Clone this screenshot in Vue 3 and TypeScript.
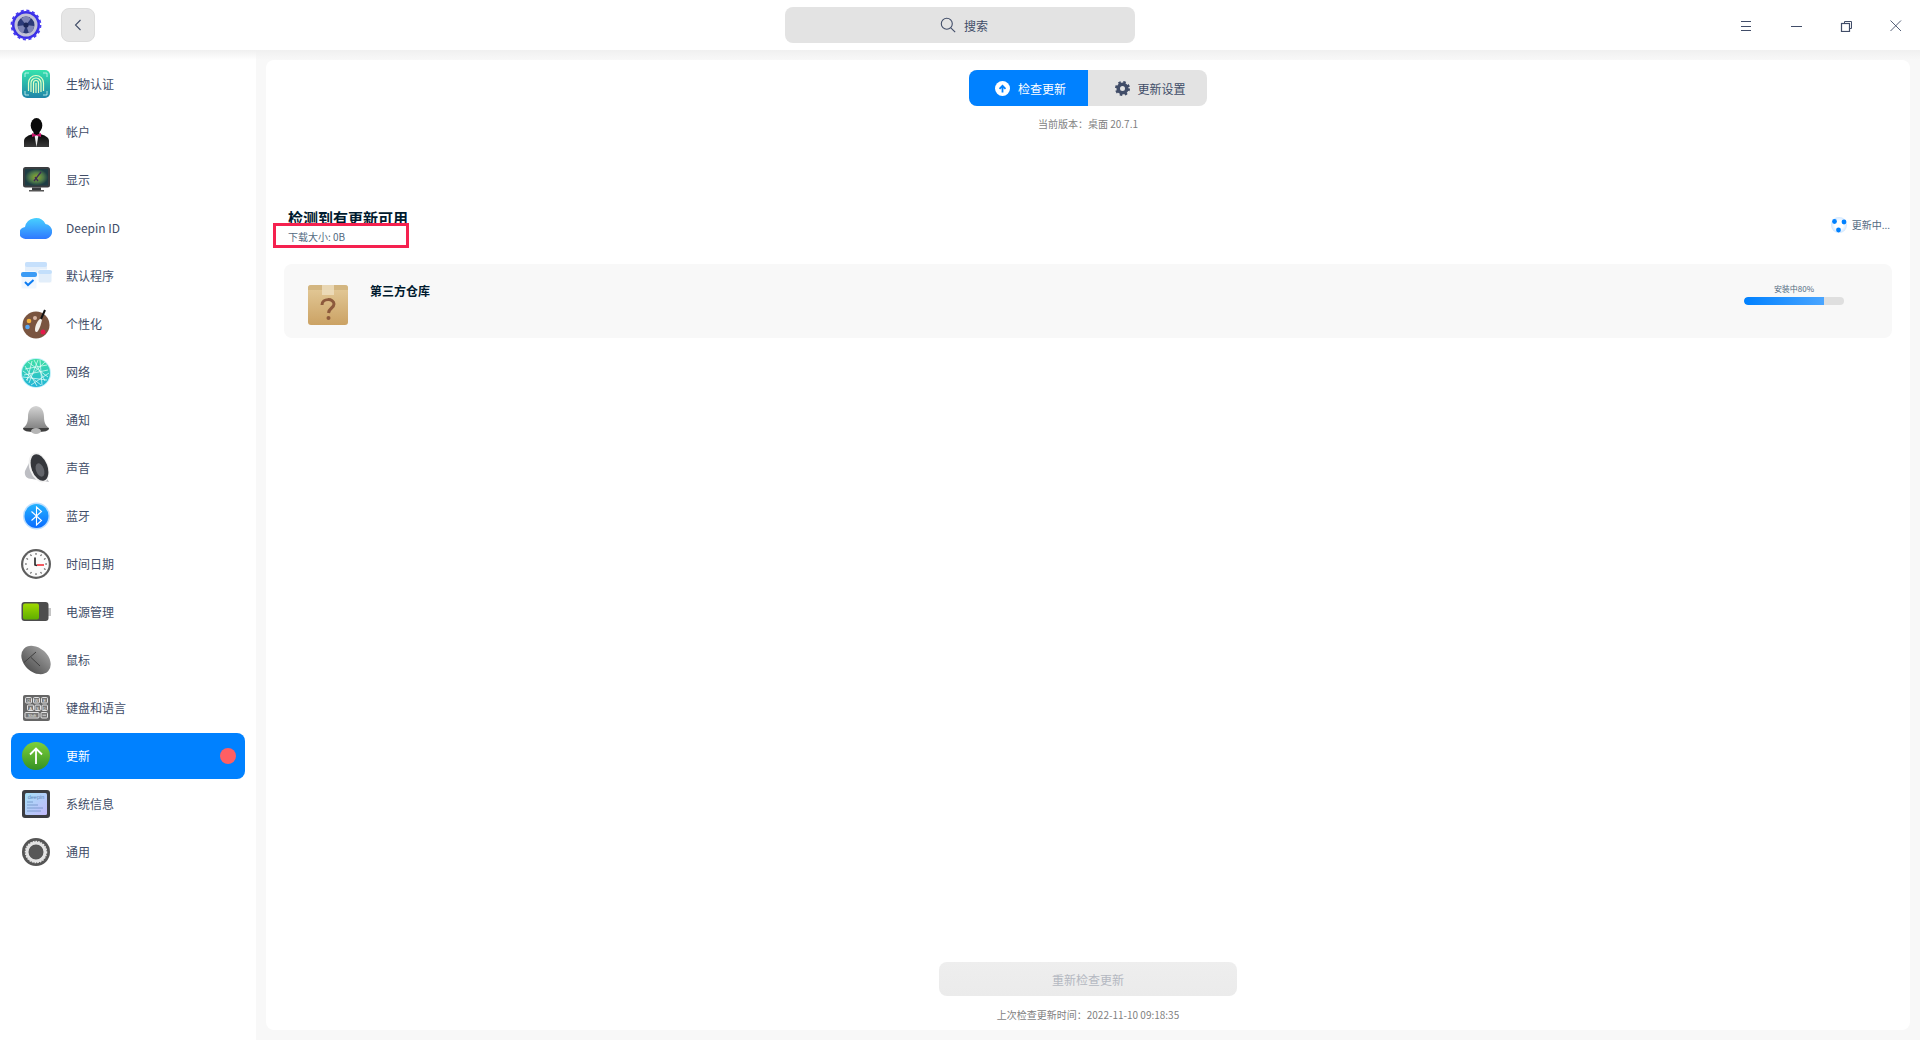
<script setup lang="ts">
const navItems = [
  { id: 'bio', label: '生物认证' },
  { id: 'account', label: '帐户' },
  { id: 'display', label: '显示' },
  { id: 'cloud', label: 'Deepin ID' },
  { id: 'defapp', label: '默认程序' },
  { id: 'theme', label: '个性化' },
  { id: 'network', label: '网络' },
  { id: 'notify', label: '通知' },
  { id: 'sound', label: '声音' },
  { id: 'bluetooth', label: '蓝牙' },
  { id: 'clock', label: '时间日期' },
  { id: 'power', label: '电源管理' },
  { id: 'mouse', label: '鼠标' },
  { id: 'keyboard', label: '键盘和语言' },
  { id: 'update', label: '更新', active: true },
  { id: 'sysinfo', label: '系统信息' },
  { id: 'general', label: '通用' },
];

const progress = 80;
const networkLines =
  'M5 13 27 9M4 19 28 14M9 27 18 4M14 4 25 25M6 24 25 6M8 6 28 21M11 29 29 17M3 15 21 29M7 25 12 5M20 4 22 29M3 21 27 24M5 10 17 30';
const clockTicks = Array.from({ length: 12 }, (_, i) => i * 30);
</script>

<template>
  <div class="app">
    <header class="titlebar">
      <div class="title-left">
        <svg class="logo" width="32" height="32" viewBox="0 0 32 32">
          <circle cx="16" cy="16" r="14" fill="#3a30e6" />
          <circle cx="16" cy="16" r="14.400" fill="none" stroke="#4a3df0" stroke-width="2" stroke-dasharray="3 2.650" />
          <circle cx="16" cy="16" r="11.500" fill="#c2c3d6" />
          <circle cx="16" cy="16" r="8.500" fill="#2b3a78" />
          <path d="M16 16 11 9.500a8 8 0 0 1 10 0ZM16 16l8 1a8 8 0 0 1-5 7.500ZM16 16l-3 8.500a8 8 0 0 1-5-7.500Z" fill="#7d84b4" />
          <circle cx="16" cy="16" r="2.600" fill="#1c2758" />
        </svg>
        <button class="back-btn">
          <svg width="10" height="14" viewBox="0 0 10 14" fill="none" stroke="#414d68" stroke-width="1.100">
            <path d="M7.500 2 2.500 7l5 5" />
          </svg>
        </button>
      </div>
      <div class="search">
        <svg width="16" height="16" viewBox="0 0 16 16" fill="none" stroke="#414d68" stroke-width="1.100">
          <circle cx="6.800" cy="6.800" r="5.500" />
          <path d="m10.800 10.800 4.400 4.400" />
        </svg>
        <span>搜索</span>
      </div>
      <div class="window-btns">
        <span class="win-btn">
          <svg width="12" height="14" viewBox="0 0 12 14" stroke="#414d68" fill="none">
            <path d="M1 3.500h10M1 8.500h10M1 12.500h10" />
          </svg>
        </span>
        <span class="win-btn">
          <svg width="12" height="14" viewBox="0 0 12 14" stroke="#414d68" fill="none">
            <path d="M1 8.500h11" />
          </svg>
        </span>
        <span class="win-btn">
          <svg width="12" height="14" viewBox="0 0 12 14" stroke="#414d68" fill="none">
            <path d="M4.500 5V3.500h7v7H10" />
            <rect x="1.500" y="5.500" width="8" height="8" stroke-width="1.200" />
          </svg>
        </span>
        <span class="win-btn">
          <svg width="12" height="14" viewBox="0 0 12 14" stroke="#414d68" fill="none" stroke-width="0.900">
            <path d="m0.500 2.500 10.500 10.500M11 2.500 0.500 13" />
          </svg>
        </span>
      </div>
    </header>

    <div class="body">
      <nav class="sidebar">
        <div v-for="item in navItems" :key="item.id" class="nav-item" :class="{ active: item.active }">
          <svg class="nav-icon" width="32" height="32" viewBox="0 0 32 32">
            <template v-if="item.id === 'bio'">
              <defs>
                <linearGradient id="bioBg" x1="0" y1="0" x2="0" y2="1">
                  <stop offset="0" stop-color="#36e3ad" />
                  <stop offset="1" stop-color="#1f84a8" />
                </linearGradient>
              </defs>
              <rect x="2" y="2" width="28" height="28" rx="5" fill="url(#bioBg)" />
              <g fill="none" stroke="#e4ffc4" stroke-width="1.200">
                <path d="M8.500 23V15a7.500 7.500 0 0 1 15 0v8" />
                <path d="M11 24V15a5 5 0 0 1 10 0v9" />
                <path d="M13.500 25V15a2.500 2.500 0 0 1 5 0v10" />
                <path d="M16 25V15" />
              </g>
              <path d="M5 9V5h4M23 5h4v4M5 23v4h4M23 27h4v-4" fill="none" stroke="#d4f7f2" stroke-width="0.800" />
            </template>

            <template v-else-if="item.id === 'account'">
              <defs>
                <linearGradient id="suitBg" x1="0" y1="0" x2="0" y2="1">
                  <stop offset="0" stop-color="#060606" />
                  <stop offset="1" stop-color="#3a3a3a" />
                </linearGradient>
              </defs>
              <ellipse cx="16.500" cy="9.500" rx="5.800" ry="7.500" fill="#0b0b0b" />
              <path d="M13.500 14h6v5h-6Z" fill="#0b0b0b" />
              <path d="M4 31v-6c0-4 5-6 9-7h7c4 1 9 3 9 7v6Z" fill="url(#suitBg)" />
              <path d="M14.500 19h4L16.500 31Z" fill="#ececec" />
              <path d="M12 17 16.500 19l4.500-2v4l-4.500-1.500L12 21Z" fill="#c8146a" />
            </template>

            <template v-else-if="item.id === 'display'">
              <defs>
                <radialGradient id="screenBg">
                  <stop offset="0" stop-color="#8fae2c" />
                  <stop offset="0.600" stop-color="#4f7a4a" />
                  <stop offset="1" stop-color="#1e3d44" />
                </radialGradient>
              </defs>
              <rect x="3" y="3" width="27" height="20.500" rx="2.500" fill="#3a3d40" />
              <rect x="5" y="5" width="23" height="16.500" fill="url(#screenBg)" />
              <path d="M14 17 21 8M15 13l3 4" stroke="#3e2a55" stroke-width="1.300" />
              <rect x="12" y="23.500" width="9" height="2.500" fill="#3a3d40" />
              <rect x="9" y="26" width="15" height="1.500" fill="#555" />
            </template>

            <template v-else-if="item.id === 'cloud'">
              <defs>
                <linearGradient id="cloudBg" x1="0" y1="0" x2="0" y2="1">
                  <stop offset="0" stop-color="#47d0ff" />
                  <stop offset="1" stop-color="#2f78ff" />
                </linearGradient>
              </defs>
              <path d="M6 27a6 6 0 0 1-1-12A11 11 0 0 1 25.500 12 7.600 7.600 0 0 1 26 27Z" fill="url(#cloudBg)" />
            </template>

            <template v-else-if="item.id === 'defapp'">
              <rect x="5" y="2" width="22" height="19" rx="2" fill="#e4effb" />
              <rect x="5" y="2" width="22" height="5" rx="2" fill="#c6e0fc" />
              <rect x="18" y="10" width="14" height="13" rx="2" fill="#e2eefa" stroke="#fff" />
              <rect x="18" y="10" width="14" height="4" rx="2" fill="#c3dffb" />
              <rect x="1" y="12" width="16" height="17" rx="2" fill="#f0f7ff" stroke="#fff" />
              <rect x="1" y="12" width="16" height="5" rx="2" fill="#3b9bf5" />
              <path d="m5 22 3 3 5.500-5" fill="none" stroke="#0d7cf2" stroke-width="2" />
            </template>

            <template v-else-if="item.id === 'theme'">
              <circle cx="16" cy="17" r="13.500" fill="#7a5540" />
              <circle cx="9" cy="13" r="2.300" fill="#f5b33e" />
              <circle cx="15" cy="10" r="2" fill="#d8b7a5" />
              <circle cx="7.500" cy="19" r="2.300" fill="#56a7f5" />
              <circle cx="23" cy="24" r="2.500" fill="#e4194b" />
              <path d="M21 10c-3 2-6 7-6 12 0 2 2 3 3 1 2-3 3-7 4-11Z" fill="#f2efe9" />
              <path d="m21 11 4-9" stroke="#111" stroke-width="2" />
            </template>

            <template v-else-if="item.id === 'network'">
              <defs>
                <linearGradient id="netBg" x1="0" y1="0" x2="0" y2="1">
                  <stop offset="0" stop-color="#3de0a4" />
                  <stop offset="1" stop-color="#22b4d8" />
                </linearGradient>
                <clipPath id="netClip">
                  <circle cx="16" cy="17" r="14" />
                </clipPath>
              </defs>
              <circle cx="16" cy="17" r="15" fill="#30d0ee" opacity="0.300" />
              <circle cx="16" cy="17" r="14" fill="url(#netBg)" />
              <path :d="networkLines" clip-path="url(#netClip)" stroke="#ecfffb" stroke-width="0.700" fill="none" />
            </template>

            <template v-else-if="item.id === 'notify'">
              <defs>
                <linearGradient id="bellBg" x1="0" y1="0" x2="0" y2="1">
                  <stop offset="0" stop-color="#d4d4d4" />
                  <stop offset="1" stop-color="#858585" />
                </linearGradient>
              </defs>
              <path d="M16 2c-6 1-8 5-8 11 0 6-2 9-5 11h26c-3-2-5-5-5-11 0-6-2-10-8-11Z" fill="url(#bellBg)" />
              <path d="M3 24h26c0 3-4 4-13 4S3 27 3 24Z" fill="#3f3f3f" />
              <ellipse cx="16" cy="27" rx="5" ry="3" fill="#b5b5b5" />
            </template>

            <template v-else-if="item.id === 'sound'">
              <path d="M13 3 5 19c-1 5 2 8 7 8l17 3Z" fill="#bdbec3" />
              <ellipse cx="19" cy="15.500" rx="9.500" ry="15.500" transform="rotate(-20 19 15.500)" fill="#f1f1f1" />
              <ellipse cx="19.500" cy="15.500" rx="8" ry="13.800" transform="rotate(-20 19.500 15.500)" fill="#35373c" />
              <ellipse cx="20" cy="18" rx="4" ry="7" transform="rotate(-20 20 18)" fill="#63656b" />
            </template>

            <template v-else-if="item.id === 'bluetooth'">
              <defs>
                <linearGradient id="btBg" x1="0" y1="0" x2="0" y2="1">
                  <stop offset="0" stop-color="#22b2ff" />
                  <stop offset="1" stop-color="#0a6cff" />
                </linearGradient>
              </defs>
              <circle cx="16.500" cy="16" r="13.500" fill="#1a90ff" opacity="0.300" />
              <circle cx="16.500" cy="16" r="12" fill="url(#btBg)" />
              <path d="m11.500 11.500 10 9-5 4.500V7l5 4.500-10 9" fill="none" stroke="#fff" stroke-width="1.100" />
            </template>

            <template v-else-if="item.id === 'clock'">
              <circle cx="16" cy="16" r="15" fill="#5e5e5e" />
              <circle cx="16" cy="16" r="12.800" fill="#fbfbfb" />
              <g stroke="#444" stroke-width="1">
                <path
                  v-for="deg in clockTicks"
                  :key="deg"
                  d="M16 5v1.800"
                  :transform="`rotate(${deg} 16 16)`"
                />
              </g>
              <path d="M15 9.500V17l2 0.500" fill="none" stroke="#222" stroke-width="1.600" />
              <path d="M17 17h7" stroke="#f2474f" stroke-width="1.800" />
            </template>

            <template v-else-if="item.id === 'power'">
              <defs>
                <linearGradient id="batBg" x1="0" y1="0" x2="0" y2="1">
                  <stop offset="0" stop-color="#9fd900" />
                  <stop offset="1" stop-color="#5fae00" />
                </linearGradient>
              </defs>
              <rect x="28" y="12" width="3" height="8" fill="#c4c4c4" />
              <rect x="1.500" y="6" width="27" height="19" rx="3" fill="#4d4d4d" />
              <rect x="3" y="7.500" width="16" height="16" rx="2" fill="url(#batBg)" />
            </template>

            <template v-else-if="item.id === 'mouse'">
              <defs>
                <linearGradient id="mouseBg" x1="0" y1="0" x2="0" y2="1">
                  <stop offset="0" stop-color="#9a9a9a" />
                  <stop offset="1" stop-color="#555" />
                </linearGradient>
              </defs>
              <ellipse cx="16" cy="16" rx="16.500" ry="12" transform="rotate(42 16 16)" fill="url(#mouseBg)" />
              <path d="M4 20.500 16 10M11 15.500 20 24" stroke="#3f3f3f" stroke-width="1" transform="translate(0 -2)" />
            </template>

            <template v-else-if="item.id === 'keyboard'">
              <rect x="3" y="3" width="27" height="26" rx="2" fill="#666" />
              <g fill="#777" stroke="#efefef" stroke-width="0.900">
                <rect x="5.500" y="5.500" width="6" height="5.500" rx="1" />
                <rect x="13.500" y="5.500" width="6" height="5.500" rx="1" />
                <rect x="21.500" y="5.500" width="6" height="5.500" rx="1" />
                <rect x="7.500" y="13" width="6" height="5.500" rx="1" />
                <rect x="15" y="13" width="5.500" height="5.500" rx="1" />
                <rect x="22" y="13" width="5.500" height="5.500" rx="1" />
                <rect x="5" y="20.500" width="14" height="5.500" rx="1" />
                <rect x="21" y="20.500" width="6.500" height="5.500" rx="1" />
              </g>
              <g class="key-text">
                <text x="8.500" y="10">Q</text>
                <text x="16.500" y="10">W</text>
                <text x="24.500" y="10">E</text>
                <text x="10.500" y="17.500">A</text>
                <text x="17.700" y="17.500">S</text>
                <text x="24.700" y="17.500">D</text>
                <text x="12" y="25">Shift</text>
              </g>
              <path d="M22.500 23.200h3.500" stroke="#efefef" stroke-width="0.800" />
            </template>

            <template v-else-if="item.id === 'update'">
              <defs>
                <linearGradient id="updBg" x1="0" y1="0" x2="0" y2="1">
                  <stop offset="0" stop-color="#7ed03c" />
                  <stop offset="1" stop-color="#349122" />
                </linearGradient>
              </defs>
              <circle cx="16" cy="16" r="14" fill="url(#updBg)" />
              <path d="M16 24V9M10 14.500 16 8.500l6 6" fill="none" stroke="#fff" stroke-width="1.800" />
            </template>

            <template v-else-if="item.id === 'sysinfo'">
              <defs>
                <linearGradient id="sysBg" x1="0" y1="0" x2="1" y2="1">
                  <stop offset="0" stop-color="#a6e0f7" />
                  <stop offset="1" stop-color="#c2b9fb" />
                </linearGradient>
              </defs>
              <rect x="2" y="2" width="28" height="28" rx="3" fill="#3c3d42" />
              <rect x="5" y="5" width="22" height="22" rx="1.500" fill="url(#sysBg)" />
              <path d="M7 14h6M7 17h11M7 20h16M7 23h14" stroke="#6f8fc4" stroke-width="0.800" />
              <text class="sys-text" x="16" y="11">deepin</text>
            </template>

            <template v-else-if="item.id === 'general'">
              <circle cx="16" cy="16" r="14" fill="#555" />
              <circle cx="16" cy="16" r="9" fill="none" stroke="#e4e4e4" stroke-width="3" />
              <circle cx="16" cy="16" r="10.500" fill="none" stroke="#e4e4e4" stroke-width="1.500" stroke-dasharray="1.700 1" />
              <circle cx="16" cy="16" r="7" fill="#575757" />
            </template>
          </svg>
          <span class="nav-label">{{ item.label }}</span>
          <span v-if="item.active" class="nav-dot"></span>
        </div>
      </nav>

      <main class="panel">
        <div class="tabs">
          <div class="tab tab-active">
            <svg width="15" height="15" viewBox="0 0 15 15">
              <circle cx="7.500" cy="7.500" r="7.500" fill="#fff" />
              <path d="M7.500 11.500V5M4.500 7.800l3-3 3 3" fill="none" stroke="#0081ff" stroke-width="1.800" />
            </svg>
            <span>检查更新</span>
          </div>
          <div class="tab tab-second">
            <svg width="15" height="15" viewBox="0 0 15 15">
              <circle cx="7.500" cy="7.500" r="4.300" fill="none" stroke="#414d68" stroke-width="3.600" />
              <circle cx="7.500" cy="7.500" r="6.400" fill="none" stroke="#414d68" stroke-width="2.200" stroke-dasharray="2.500 2.530" />
            </svg>
            <span>更新设置</span>
          </div>
        </div>
        <div class="version">当前版本：桌面 20.7.1</div>

        <section class="summary">
          <div class="summary-text">
            <div class="summary-title">检测到有更新可用</div>
            <div class="summary-size">下载大小: 0B</div>
            <div class="highlight"></div>
          </div>
          <div class="status">
            <svg width="16" height="16" viewBox="0 0 16 16">
              <defs>
                <radialGradient id="spinGlow">
                  <stop offset="0" stop-color="#ffffff" />
                  <stop offset="0.500" stop-color="#ffffff" />
                  <stop offset="1" stop-color="#bcdcff" />
                </radialGradient>
              </defs>
              <circle cx="8" cy="8" r="8" fill="url(#spinGlow)" opacity="0.700" />
              <circle cx="3.500" cy="4.500" r="2.400" fill="#0081ff" />
              <circle cx="13" cy="5" r="2.400" fill="#0081ff" />
              <circle cx="7.500" cy="13" r="2.400" fill="#0081ff" />
            </svg>
            <span>更新中...</span>
          </div>
        </section>

        <div class="repo-card">
          <svg class="repo-icon" width="42" height="42" viewBox="0 0 42 42">
            <defs>
              <linearGradient id="boxBg" x1="0" y1="0" x2="0" y2="1">
                <stop offset="0" stop-color="#e4cb9a" />
                <stop offset="1" stop-color="#cba264" />
              </linearGradient>
            </defs>
            <rect x="1" y="2" width="40" height="40" rx="3" fill="url(#boxBg)" />
            <path d="M1 7h40V5a3 3 0 0 0-3-3H4a3 3 0 0 0-3 3Z" fill="#d3b681" />
            <rect x="15" y="2" width="12" height="10" fill="#efe0c0" opacity="0.800" />
            <path d="M15 22c0-7 12-7 12-1 0 4-5 4-5.500 9" fill="none" stroke="#8d5a3c" stroke-width="3" />
            <circle cx="21.500" cy="35" r="2" fill="#8d5a3c" />
          </svg>
          <div class="repo-name">第三方仓库</div>
          <div class="repo-progress">
            <div class="progress-label">安装中{{ progress }}%</div>
            <div class="progress-track">
              <div class="progress-fill" :style="{ width: progress + '%' }"></div>
            </div>
          </div>
        </div>

        <button class="recheck" disabled>重新检查更新</button>
        <div class="last-check">上次检查更新时间：2022-11-10 09:18:35</div>
      </main>
    </div>
  </div>
</template>

<style>
html,
body {
  margin: 0;
  background: #f8f8f8;
}
</style>

<style scoped>
.app {
  width: 1920px;
  height: 1040px;
  display: flex;
  flex-direction: column;
  overflow: hidden;
  font-family: "Noto Sans CJK SC", "Noto Sans", sans-serif;
  color: #414d68;
}

.titlebar {
  position: relative;
  z-index: 2;
  flex: none;
  height: 50px;
  background: #fff;
  display: grid;
  grid-template-columns: 1fr 350px 1fr;
  align-items: center;
}

.titlebar::after {
  content: "";
  position: absolute;
  left: 0;
  right: 0;
  top: 50px;
  height: 10px;
  background: linear-gradient(#f0f0f0, rgba(248, 248, 248, 0));
  pointer-events: none;
}

.title-left {
  display: flex;
  align-items: center;
  padding-left: 10px;
  gap: 19px;
}

.back-btn {
  width: 34px;
  height: 34px;
  padding: 0;
  border: 1px solid #dcdcdc;
  border-radius: 8px;
  background: #e6e6e6;
  display: flex;
  align-items: center;
  justify-content: center;
}

.search {
  height: 36px;
  border-radius: 8px;
  background: #e3e3e3;
  display: flex;
  align-items: center;
  justify-content: center;
  gap: 8px;
  padding-left: 8px;
  font-size: 12px;
}

.window-btns {
  display: flex;
  justify-content: flex-end;
  margin-right: -1px;
}

.win-btn {
  width: 50px;
  height: 50px;
  display: flex;
  align-items: center;
  justify-content: center;
}

.body {
  flex: 1;
  min-height: 0;
  display: flex;
  background: #f8f8f8;
}

.sidebar {
  flex: none;
  width: 245px;
  padding: 11px 0 0 11px;
  background: #fff;
  display: flex;
  flex-direction: column;
  gap: 2px;
}

.nav-item {
  width: 234px;
  height: 46px;
  box-sizing: border-box;
  padding: 0 9px;
  border-radius: 8px;
  display: flex;
  align-items: center;
  gap: 14px;
  font-size: 12px;
  line-height: 16px;
}

.nav-item.active {
  background: #0081ff;
  color: #fff;
}

.nav-icon {
  flex: none;
}

.key-text text {
  font-family: "Liberation Sans", sans-serif;
  font-size: 4px;
  text-anchor: middle;
  fill: #f2f2f2;
}

.sys-text {
  font-family: "Liberation Sans", sans-serif;
  font-size: 5.500px;
  text-anchor: middle;
  fill: #5d86b8;
}

.nav-dot {
  width: 16px;
  height: 16px;
  margin-left: auto;
  border-radius: 50%;
  background: #ff5f63;
}

.panel {
  flex: none;
  width: 1644px;
  margin: 10px;
  padding-bottom: 8px;
  box-sizing: border-box;
  background: #fff;
  border-radius: 8px;
  display: flex;
  flex-direction: column;
}

.tabs {
  align-self: center;
  margin-top: 10px;
  display: flex;
  width: 238px;
  height: 36px;
  border-radius: 8px;
  overflow: hidden;
  background: #e3e3e3;
  font-size: 12px;
}

.tab {
  flex: 1;
  display: flex;
  align-items: center;
  gap: 8px;
  padding-left: 26px;
}

.tab-second {
  padding-left: 27px;
}

.tab-active {
  background: #0081ff;
  color: #fff;
}

.version {
  margin-top: 10px;
  text-align: center;
  font-size: 10px;
  line-height: 16px;
  color: #7f7f7f;
}

.summary {
  margin-top: 76px;
  padding: 0 18px 0 22px;
  display: flex;
  justify-content: space-between;
  align-items: center;
}

.summary-text {
  position: relative;
}

.summary-title {
  font-size: 15px;
  line-height: 20px;
  font-weight: 700;
  color: #001a2e;
}

.summary-size {
  margin-top: 1px;
  font-size: 10px;
  line-height: 16px;
  color: #526a7f;
}

.highlight {
  position: absolute;
  left: -15px;
  top: 15px;
  width: 136px;
  height: 25px;
  box-sizing: border-box;
  border: 3px solid #f5214f;
}

.status {
  display: flex;
  align-items: center;
  gap: 5px;
  font-size: 10px;
  line-height: 14px;
  color: #526a7f;
  margin-right: 2px;
  margin-top: -4px;
}

.repo-card {
  margin: 19px 18px 0;
  height: 74px;
  box-sizing: border-box;
  padding: 19px 48px 0 23px;
  background: #f8f8f8;
  border-radius: 8px;
  display: flex;
  align-items: flex-start;
}

.repo-name {
  margin-left: 21px;
  font-size: 12px;
  line-height: 16px;
  font-weight: 700;
  color: #001a2e;
}

.repo-progress {
  margin-left: auto;
  width: 100px;
  text-align: center;
}

.progress-label {
  font-size: 8px;
  line-height: 10px;
  margin-top: 1px;
  color: #526a7f;
}

.progress-track {
  margin-top: 3px;
  height: 8px;
  border-radius: 4px;
  overflow: hidden;
  background: #dfdfdf;
}

.progress-fill {
  height: 100%;
  border-radius: 4px 0 0 4px;
  background: linear-gradient(90deg, #0081ff, #4aa5ff);
}

.recheck {
  align-self: center;
  margin-top: auto;
  width: 298px;
  height: 34px;
  padding: 0;
  border: 0;
  border-radius: 8px;
  background: linear-gradient(#eeeeee, #ebebeb);
  font-family: inherit;
  font-size: 12px;
  color: #b4b8c1;
}

.last-check {
  margin-top: 12px;
  text-align: center;
  font-size: 10px;
  line-height: 14px;
  color: #7f7f7f;
}
</style>
